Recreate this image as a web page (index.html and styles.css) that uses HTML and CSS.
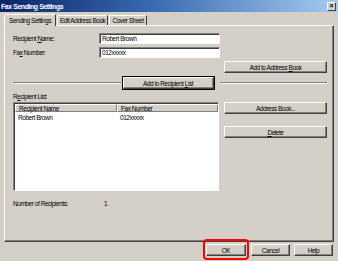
FILE: index.html
```html
<!DOCTYPE html>
<html lang="en">
<head>
    <meta charset="UTF-8">
    <title>Fax Sending Settings</title>
    <link rel="stylesheet" href="styles.css">
</head>
<body>
    <div class="window">
        <div class="titlebar">
            <span>Fax Sending Settings</span>
            <div class="close">&#215;</div>
        </div>
        <div class="content">
            <div class="tabs">
                <div class="tab active">Sending Settings</div>
                <div class="tab">Edit Address Book</div>
                <div class="tab">Cover Sheet</div>
            </div>
            <div class="panel">
                <div class="field">
                    <label>Recipient <u>N</u>ame:</label>
                    <div class="input">Robert Brown</div>
                </div>
                <div class="field">
                    <label>Fa<u>x</u> Number:</label>
                    <div class="input">012xxxxx</div>
                </div>
                <div class="row-right">
                    <button class="btn wide">Add to Address <u>B</u>ook</button>
                </div>
                <div class="sep-row">
                    <div class="sep"></div>
                    <button class="btn default">Add to Recipient <u>L</u>ist</button>
                    <div class="sep"></div>
                </div>
                <div class="list-label">R<u>e</u>cipient List:</div>
                <div class="list-row">
                    <div class="listview">
                        <div class="lv-head">
                            <div class="col1">Recipient Name</div>
                            <div class="col2">Fax Number</div>
                        </div>
                        <div class="lv-item">
                            <div class="col1">Robert Brown</div>
                            <div class="col2">012xxxxx</div>
                        </div>
                    </div>
                    <div class="side">
                        <button class="btn wide">Address Book...</button>
                        <button class="btn wide"><u>D</u>elete</button>
                    </div>
                </div>
                <div class="count">
                    <span class="count-label">Number of Recipients:</span>
                    <span>1</span>
                </div>
            </div>
            <div class="footer">
                <div class="highlight">
                    <button class="btn small">OK</button>
                </div>
                <button class="btn small">Cancel</button>
                <button class="btn small">Help</button>
            </div>
        </div>
    </div>
</body>
</html>
```

FILE: styles.css
```css
body {
    margin: 0;
    padding: 0;
    background-color: #d4d0c8;
    font-family: "Liberation Sans", Arial, sans-serif;
    font-size: 6.5px;
    letter-spacing: -0.45px;
    color: #000;
}
.window {
    width: 338px;
    height: 261px;
    overflow: hidden;
    background-color: #d4d0c8;
}
.titlebar {
    height: 12px;
    display: flex;
    align-items: center;
    justify-content: space-between;
    padding: 0 2px 0 1px;
    background: linear-gradient(to right, #0a246a, #3a6ab0 45%, #a6caf0);
    color: white;
    font-weight: bold;
    font-size: 7px;
    letter-spacing: -0.45px;
}
.close {
    width: 7px;
    height: 7px;
    background-color: #d4d0c8;
    border: 1px solid;
    border-color: #fff #404040 #404040 #fff;
    color: #000;
    font-size: 7px;
    line-height: 6px;
    text-align: center;
    font-weight: bold;
    letter-spacing: 0;
}
.content {
    padding: 2px 4px 0 4px;
}
.tabs {
    display: flex;
    height: 11px;
    align-items: flex-end;
}
.tab {
    height: 9px;
    padding: 0 2px;
    border: 1px solid;
    border-color: #fff #404040 transparent #fff;
    border-bottom: none;
    line-height: 9px;
    margin-right: 1px;
}
.tab.active {
    height: 11px;
    line-height: 11px;
    padding: 0 4px;
    position: relative;
    z-index: 1;
    background-color: #d4d0c8;
    margin-bottom: -1px;
}
.panel {
    height: 208px;
    border: 1px solid;
    border-color: #fff #404040 #404040 #fff;
    box-shadow: inset -1px -1px 0 #808080;
    padding: 7px 6px 0 8px;
}
.field {
    display: flex;
    align-items: center;
    height: 11px;
    margin-bottom: 3px;
}
.field label {
    width: 86px;
}
.input {
    width: 115px;
    height: 9px;
    background: white;
    border: 1px solid;
    border-color: #808080 #fff #fff #808080;
    box-shadow: inset 1px 1px 0 #404040;
    padding: 0 2px;
    line-height: 9px;
}
.btn {
    font-family: inherit;
    font-size: 6.5px;
    letter-spacing: -0.45px;
    background-color: #d4d0c8;
    border: 1px solid;
    border-color: #fff #404040 #404040 #fff;
    box-shadow: inset -1px -1px 0 #808080;
    padding: 0;
    height: 12px;
    color: #000;
}
.btn.wide {
    width: 103px;
}
.btn.default {
    width: 91px;
    outline: 1px solid #000;
    margin: 0 6px 0 2px;
}
.btn.small {
    width: 39px;
}
.row-right {
    display: flex;
    justify-content: flex-end;
    margin-bottom: 4px;
}
.sep-row {
    display: flex;
    align-items: center;
    height: 12px;
}
.sep {
    flex: 1;
    border-top: 1px solid #808080;
    border-bottom: 1px solid #fff;
}
.list-label {
    margin-top: 3px;
    height: 9px;
    line-height: 9px;
}
.list-row {
    display: flex;
    justify-content: space-between;
    margin-top: 1px;
}
.listview {
    width: 203px;
    height: 86px;
    background: white;
    border: 1px solid;
    border-color: #808080 #fff #fff #808080;
    box-shadow: inset 1px 1px 0 #404040;
    padding: 1px 0 0 1px;
    box-sizing: content-box;
}
.lv-head {
    display: flex;
    height: 8px;
    line-height: 8px;
}
.lv-head div {
    background-color: #d4d0c8;
    border: 1px solid;
    border-color: #fff #808080 #808080 #fff;
    padding-left: 3px;
    box-sizing: border-box;
}
.lv-head .col2 {
    flex: 1;
}
.col1 {
    width: 102px;
}
.lv-item {
    display: flex;
    height: 9px;
    line-height: 9px;
    margin-top: 1px;
}
.lv-item div {
    padding-left: 3px;
    box-sizing: border-box;
}
.side {
    display: flex;
    flex-direction: column;
    gap: 12px;
}
.count {
    display: flex;
    margin-top: 9px;
}
.count-label {
    width: 91px;
}
.footer {
    display: flex;
    justify-content: flex-end;
    align-items: center;
    gap: 4px;
    margin-top: 2px;
    padding-right: 1px;
}
.highlight {
    position: relative;
    margin-right: 1px;
}
.highlight::after {
    content: "";
    position: absolute;
    left: -3px;
    right: -3px;
    top: -5px;
    bottom: -4px;
    border: 2px solid #ff0000;
    border-radius: 4px;
}
.highlight .btn {
    display: block;
    width: 40px;
}
```
